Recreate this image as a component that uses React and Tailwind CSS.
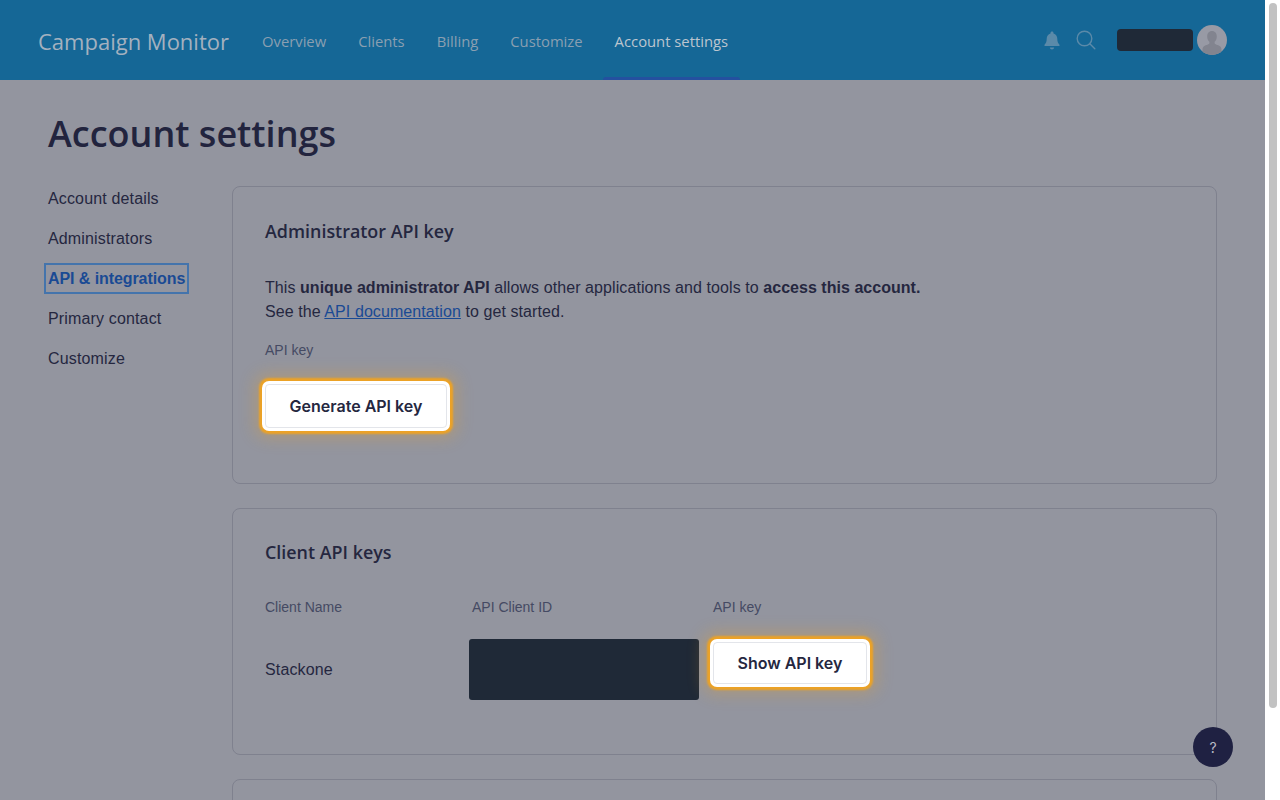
import React from "react";

const body = "font-['Liberation_Sans',Arial,sans-serif]";
const head = "font-['Open_Sans','Noto_Sans',sans-serif]";
const ui = "font-['Inter','Liberation_Sans',sans-serif]";

function Nav({ children, active }) {
  return (
    <a className={`relative flex h-20 items-center px-4 pt-[3px] text-[14.8px] ${active ? "text-[#bcc5cf]" : "text-[#8a9fb1]"}`}>
      {children}
      {active && <span className="absolute bottom-0 left-1 right-1 h-[3px] rounded-t bg-[#24509f]" />}
    </a>
  );
}

function Glow({ className, children }) {
  return (
    <button className={`flex items-center justify-center rounded-[4px] border border-[#e3e5ea] bg-white text-[16px] font-semibold text-[#25273f] shadow-[0_0_0_3px_#ffffff,0_0_2px_6px_#eca225,0_0_16px_10px_rgba(239,162,31,0.28)] ${ui} ${className}`}>
      {children}
    </button>
  );
}

function Side({ children, active }) {
  if (active)
    return (
      <div className="flex h-10 items-center pt-[1px]">
        <span className="-mx-[4px] border-2 border-[#4474ac] px-[2px] py-[1.5px] text-[16px] font-bold leading-[24px] tracking-[-0.08px] text-[#1a4a94]">{children}</span>
      </div>
    );
  return <div className="flex h-10 items-center pt-[2px] text-[16px] tracking-[0.15px] text-[#25273f]">{children}</div>;
}

export default function App() {
  return (
    <div className="flex h-[800px] w-[1280px] overflow-hidden bg-white">
      <div className="h-[800px] w-[1265px] shrink-0 overflow-hidden bg-[#93959f]">
        <header className={`flex h-20 items-center bg-[#156796] pl-[38px] pr-[38px] ${head}`}>
          <div className="mr-[17px] pt-[3px] text-[22px] text-[#a4b1bf]">Campaign Monitor</div>
          <nav className="flex">
            <Nav>Overview</Nav>
            <Nav>Clients</Nav>
            <Nav>Billing</Nav>
            <Nav>Customize</Nav>
            <Nav active>Account settings</Nav>
          </nav>
          <div className="ml-auto flex items-center">
            <svg width="16" height="19" viewBox="0 0 16 19" className="mr-[16px]" fill="#5b8aa9">
              <path d="M8 0.5c.9 0 1.5.6 1.5 1.5v.4c2.4.7 3.800 2.700 3.800 5.300 0 3.200.7 4.400 2.200 6v1.300H.5v-1.300c1.500-1.600 2.200-2.800 2.200-6 0-2.600 1.400-4.600 3.800-5.300V2c0-.9.6-1.500 1.500-1.500z" />
              <path d="M5.800 16.400h4.400c-.2 1.200-1.100 2-2.200 2s-2-.8-2.200-2z" />
            </svg>
            <svg width="20" height="20" viewBox="0 0 20 20" className="mr-[21px]" fill="none" stroke="#5b8aa9" strokeWidth="1.4">
              <circle cx="8.500" cy="8.500" r="7.300" />
              <path d="M13.800 13.800l5 5" strokeLinecap="round" />
            </svg>
            <div className="h-[22px] w-[76px] rounded-[4px] bg-[#1f2937]" />
            <div className="ml-[4px] h-[30px] w-[30px] overflow-hidden rounded-full bg-[#989aa5]">
              <svg viewBox="0 0 30 30" width="30" height="30" fill="#82848f">
                <path d="M15 6c3 0 4.800 2.300 4.800 5.400 0 2.300-1 4.300-2.200 5.400v1.500c0 1 3.400 1.700 5.400 3 1.300.8 1.500 2.500 1.500 3.700V30H5.500v-5c0-1.200.2-2.900 1.500-3.700 2-1.300 5.400-2 5.400-3v-1.500c-1.200-1.100-2.200-3.100-2.200-5.400C10.200 8.300 12 6 15 6z" />
              </svg>
            </div>
          </div>
        </header>

        <main className="px-[48px]">
          <h1 className={`pt-[30px] text-[36px] font-semibold leading-[48px] text-[#22243e] ${head}`}>Account settings</h1>
          <div className={`mt-[28px] flex ${body}`}>
            <aside className="-mt-[8px] w-[184px] shrink-0">
              <Side>Account details</Side>
              <Side>Administrators</Side>
              <Side active>API &amp; integrations</Side>
              <Side>Primary contact</Side>
              <Side>Customize</Side>
            </aside>
            <div className="flex w-[985px] flex-col gap-[24px]">
              <section className="h-[298px] rounded-[8px] border border-[#7f818e] px-[32px] pt-[32px]">
                <h2 className={`text-[17.9px] font-semibold leading-[24px] text-[#25273f] ${head}`}>Administrator API key</h2>
                <p className="mt-[33px] text-[16px] leading-[24px] tracking-[0.08px] text-[#25273f]">
                  This <b className="tracking-[0px]">unique administrator API</b> allows other applications and tools to <b className="tracking-[0.03px]">access this account.</b>
                  <br />
                  See the <a className="text-[#1a4a94] underline">API documentation</a> to get started.
                </p>
                <div className="mt-[14px] text-[14px] leading-[24px] text-[#454a63]">API key</div>
                <Glow className="mt-[22px] h-[44px] w-[182px]">Generate API key</Glow>
              </section>

              <section className="h-[247px] rounded-[8px] border border-[#7f818e] px-[32px] pt-[31px]">
                <h2 className={`text-[17.9px] font-semibold leading-[24px] text-[#25273f] ${head}`}>Client API keys</h2>
                <div className="mt-[31px] grid grid-cols-[207px_241px_1fr] text-[14px] leading-[24px] text-[#454a63]">
                  <div>Client Name</div>
                  <div>API Client ID</div>
                  <div>API key</div>
                </div>
                <div className="mt-[20px] grid grid-cols-[204px_244px_1fr] items-center">
                  <div className="text-[16px] tracking-[0.15px] text-[#25273f]">Stackone</div>
                  <div className="h-[61px] w-[230px] rounded-[3px] bg-[#1f2937]" />
                  <Glow className="-mt-[14px] h-[42px] w-[154px]">Show API key</Glow>
                </div>
              </section>

              <section className="h-[200px] rounded-[8px] border border-[#7f818e]" />
            </div>
          </div>
        </main>
      </div>

      <div className="flex w-[15px] shrink-0 justify-center bg-white pt-[3px]">
        <div className="h-[705px] w-[8px] rounded-full bg-[#c2c2c2]" />
      </div>

      <div className={`absolute left-[1193px] top-[727px] flex h-10 w-10 items-center justify-center rounded-full bg-[#1f2142] text-[14px] text-[#b8bac6] ${ui}`}>?</div>
    </div>
  );
}
